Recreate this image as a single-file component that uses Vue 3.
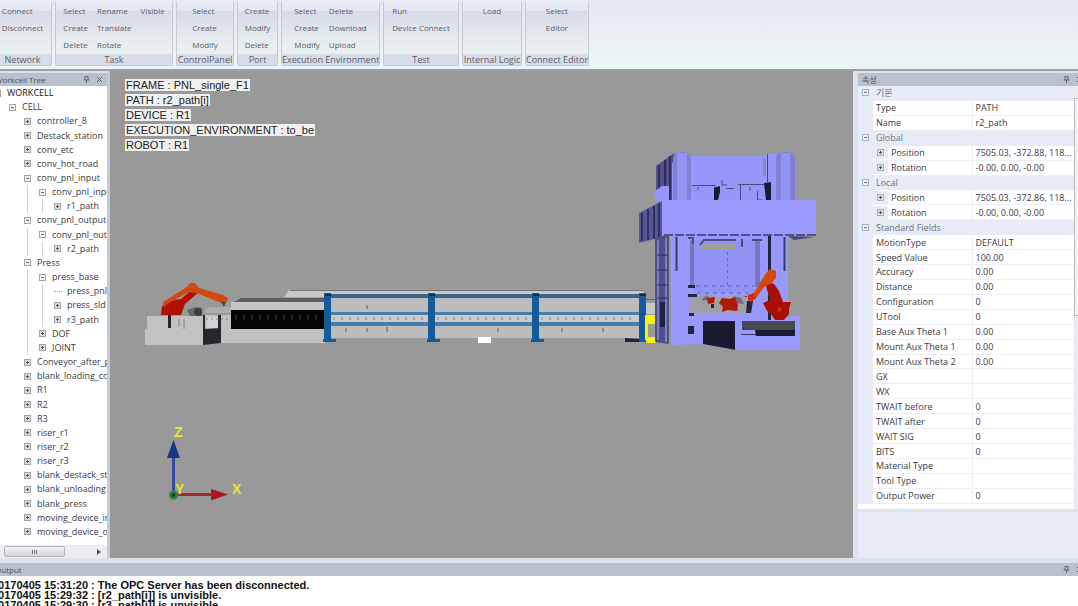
<script setup>
import { ref } from 'vue'

const ribbon = [
  { name: 'Network', cls: 'g-network', cols: [['Connect', 'Disconnect']] },
  { name: 'Task', cls: 'g-task', cols: [['Select', 'Create', 'Delete'], ['Rename', 'Translate', 'Rotate'], ['Visible']] },
  { name: 'ControlPanel', cls: 'g-control', cols: [['Select', 'Create', 'Modify']] },
  { name: 'Port', cls: 'g-port', cols: [['Create', 'Modify', 'Delete']] },
  { name: 'Execution Environment', cls: 'g-exec', cols: [['Select', 'Create', 'Modify'], ['Delete', 'Download', 'Upload']] },
  { name: 'Test', cls: 'g-test', cols: [['Run', 'Device Connect']] },
  { name: 'Internal Logic', cls: 'g-logic', cols: [['Load']] },
  { name: 'Connect Editor', cls: 'g-editor', cols: [['Select', 'Editor']] }
]

const tree = [
  [0, 'WORKCELL', '-'], [1, 'CELL', '-'], [2, 'controller_8', '+'], [2, 'Destack_station', '+'],
  [2, 'conv_etc', '+'], [2, 'conv_hot_road', '+'], [2, 'conv_pnl_input', '-'], [3, 'conv_pnl_input', '-'],
  [4, 'r1_path', '+'], [2, 'conv_pnl_output', '-'], [3, 'conv_pnl_output', '-'], [4, 'r2_path', '+'],
  [2, 'Press', '-'], [3, 'press_base', '-'], [4, 'press_pnl_', ''], [4, 'press_sld', '+'],
  [4, 'r3_path', '+'], [3, 'DOF', '+'], [3, 'JOINT', '+'], [2, 'Conveyor_after_press', '+'],
  [2, 'blank_loading_conv', '+'], [2, 'R1', '+'], [2, 'R2', '+'], [2, 'R3', '+'], [2, 'riser_r1', '+'],
  [2, 'riser_r2', '+'], [2, 'riser_r3', '+'], [2, 'blank_destack_station', '+'], [2, 'blank_unloading', '+'],
  [2, 'blank_press', '+'], [2, 'moving_device_in', '+'], [2, 'moving_device_out', '+']
].map(([level, label, sign]) => ({ level, label, sign }))

const labels = [
  'FRAME : PNL_single_F1',
  'PATH : r2_path[i]',
  'DEVICE : R1',
  'EXECUTION_ENVIRONMENT : to_be',
  'ROBOT : R1'
]

const props = [
  { cat: '기본' }, { k: 'Type', v: 'PATH' }, { k: 'Name', v: 'r2_path' },
  { cat: 'Global' }, { k: 'Position', v: '7505.03, -372.88, 118...', sub: true }, { k: 'Rotation', v: '-0.00, 0.00, -0.00', sub: true },
  { cat: 'Local' }, { k: 'Position', v: '7505.03, -372.86, 118...', sub: true }, { k: 'Rotation', v: '-0.00, 0.00, -0.00', sub: true },
  { cat: 'Standard Fields' }, { k: 'MotionType', v: 'DEFAULT' }, { k: 'Speed Value', v: '100.00' },
  { k: 'Accuracy', v: '0.00' }, { k: 'Distance', v: '0.00' }, { k: 'Configuration', v: '0' }, { k: 'UTool', v: '0' },
  { k: 'Base Aux Theta 1', v: '0.00' }, { k: 'Mount Aux Theta 1', v: '0.00' }, { k: 'Mount Aux Theta 2', v: '0.00' },
  { k: 'GX', v: '' }, { k: 'WX', v: '' }, { k: 'TWAIT before', v: '0' }, { k: 'TWAIT after', v: '0' },
  { k: 'WAIT SIG', v: '0' }, { k: 'BITS', v: '0' }, { k: 'Material Type', v: '' }, { k: 'Tool Type', v: '' },
  { k: 'Output Power', v: '0' }
]

const log = [
  '20170405 15:31:20 : The OPC Server has been disconnected.',
  '20170405 15:29:32 : [r2_path[i]] is unvisible.',
  '20170405 15:29:30 : [r3_path[i]] is unvisible.'
]

const selected = ref(-1)
const posts = [325, 429, 533, 640]
const ticks = Array.from({ length: 38 }, (_, i) => 334 + i * 8)
const rollers = Array.from({ length: 11 }, (_, i) => 236 + i * 8)
</script>

<template>
  <div class="app">
    <header class="ribbon">
      <section v-for="g in ribbon" :key="g.name" class="group" :class="g.cls">
        <div class="cols">
          <div v-for="(c, i) in g.cols" :key="i" class="col">
            <button v-for="b in c" :key="b" type="button">{{ b }}</button>
          </div>
        </div>
        <h2>{{ g.name }}</h2>
      </section>
    </header>

    <main class="work">
      <aside class="left">
        <div class="bar clipped">
          <h3>Workcell Tree</h3>
          <button type="button" class="tool" aria-label="Pin">
            <svg viewBox="0 0 7 7"><path d="M2 .5h3v3.5M2 .5v3.5M.5 4h6M3.5 4v3" /></svg>
          </button>
          <button type="button" class="tool" aria-label="Close">
            <svg viewBox="0 0 7 7"><path d="M1 1l5 5M6 1l-5 5" /></svg>
          </button>
        </div>
        <ul class="tree" role="tree" aria-label="Workcell Tree">
          <li v-for="(n, i) in tree" :key="i" role="treeitem" :aria-level="n.level + 1"
              :class="{ root: n.level === 0, on: selected === i }" @click="selected = i">
            <i v-for="s in n.level" :key="s" class="guide" :class="{ line: s > 2 }"></i>
            <span class="slot">
              <button v-if="n.sign" type="button" class="sign" :class="{ plus: n.sign === '+' }" :aria-label="'Toggle ' + n.label"></button>
              <span v-else class="leaf"></span>
            </span>
            <span class="name">{{ n.label }}</span>
          </li>
        </ul>
        <div class="hscroll">
          <div class="thumb"><i></i></div>
          <svg class="arrow" viewBox="0 0 4 6"><path d="M0 0l4 3-4 3z" /></svg>
        </div>
      </aside>

      <section class="view" aria-label="3D view">
        <svg class="scene" viewBox="110 71 743 487" preserveAspectRatio="xMinYMin meet" aria-hidden="true">
          <!-- conveyor bed -->
          <path fill="#c1c1c1" d="M205 315h120v28H205z" />
          <path fill="#999" d="M205 307h26v7h-26z" />
          <path fill="#adadad" d="M205 309l6-2h20v6h-26z" />
          <path fill="#5f5f5f" d="M234 302l7-4h84v5z" />
          <path fill="#c6c6c6" d="M231 302h94v8h-94z" />
          <path fill="#050505" d="M231 310h94v19h-94z" />
          <path v-for="x in rollers" :key="x" stroke="#3c3c3c" :d="`M${x} 315v5`" />
          <path fill="#d2d2d2" d="M207 317h11v12h-11z" />
          <path stroke="#8a8a8a" stroke-dasharray="2 3" d="M206 319h22" />
          <path fill="#c2c2c2" d="M147 316h56v29h-58v-16h2z" />
          <path fill="#26262d" d="M203 329l18-1v15l-18 2zM203 315h2v15h-2zM218 315h3v14h-3z" />
          <path stroke="#24242a" stroke-width="3" d="M169.500 315v13" />
          <path stroke="#9ba2ae" stroke-width="2" d="M179 319v8M184 319v10" />
          <path fill="#666" d="M187 310l9-3 6 1v8h-12z" />
          <circle cx="198" cy="312" r="4" fill="#3c3c40" />

          <!-- left robot -->
          <path fill="#b00f04" d="M161 315l1-9 6-5 13-2 12-10 6 3-14 12-4 11z" />
          <path fill="#d1490c" d="M163 302l24-15 3-4 5 0 4 5 24 7 5 3-1 4-6 1-24-10-8-1-22 12-3 4z" />
          <path fill="#444" d="M221 302h5l-2 5z" />

          <!-- fenced line -->
          <path fill="#c9c9c9" d="M284 297l5-7h353l3 5H330v2z" />
          <path stroke="#777" d="M290 290.500h353" />
          <path fill="#bcbcbc" d="M327 295h317v43H327z" />
          <path fill="#cbcbcb" d="M329 315h311v7H329z" />
          <path v-for="x in ticks" :key="x" stroke="#888" :d="`M${x} 317v3`" />
          <path stroke="#8c8c8c" stroke-width="2" d="M346 328v4M367 305v4M367 328v4M387 327v5M498 328v4M562 328v4M603 328v4" />
          <path fill="#3b6388" d="M328 294h314v4H328z" />
          <path fill="#467fae" d="M328 312h314v3H328zM328 322h314v4H328z" />
          <g v-for="x in posts" :key="x" fill="#155a99">
            <path :d="`M${x - 1} 293h7v46h5v3h-13v-3h1z`" />
            <path fill="#152b48" :d="`M${x} 294h6v2h-6z`" />
          </g>
          <path fill="#1b2735" d="M625 338l14 1v3h-14z" />
          <path fill="#fff" d="M478 337h13v6h-13z" />
          <path fill="#c7c7c7" d="M646 303h10v11h-10z" />
          <path stroke="#666" d="M645 299.500h11" />
          <path fill="#f4f400" d="M645 315h11v9h-8v13h8v6h-9l-2-4z" />

          <!-- press head -->
          <path fill="#51518c" d="M656 166l18-13v48h-18z" />
          <path stroke="#2e2e55" stroke-width="2" d="M659 165v36M665 160v41M670 156v44" />
          <path fill="#9797fb" d="M688 156h76l2-2h14v47H672v-38h16zM654 192l8-6 7 0v15h-14z" />
          <rect x="673" y="152" width="18" height="60" rx="7" fill="#8080d4" />
          <path fill="#9494f4" d="M677 153h10v48h-10z" />
          <rect x="776" y="152" width="19" height="60" rx="7" fill="#8080d4" />
          <path fill="#9494f4" d="M781 153h9v48h-9z" />
          <path stroke="#4a4a80" fill="none" d="M692 185.500h23v4M722 180v5h5M726 188.500h8M738 184.500h26M740.500 185v15M698 187v3M750 187v4M757.500 191v9h5M767.500 154v28" />
          <path fill="#191b35" d="M714 188l6-2v6l-2 8h-4zM764 183l7-1v18h-5z" />
          <path fill="#8a8ab0" d="M763 158h3v18h-3z" />

          <!-- press body -->
          <path fill="#4f4f88" d="M655 236h14v108l-14-2z" />
          <path stroke="#7c7ccb" stroke-width="2" d="M658 240v100M666 238v104" />
          <path fill="#222342" d="M660 302h5v25h-5z" />
          <path stroke="#2c2c50" d="M657 255h10M657 270h10M657 285h10M657 298h10M671.500 236v60" />
          <path fill="#9898fd" d="M671 233h117v83h12v34l-65 0-33-6-31 1z" />
          <path fill="#7676bf" d="M690 240h4v48h-4zM755 241h5v46h-5z" />
          <path fill="#9292f6" d="M694 240h61v52h-61z" />
          <path fill="#a0a0a0" d="M702 244h34v5h-35z" />
          <path stroke="#4a4a80" fill="none" stroke-width="2" d="M688 238h5v6M700 245l4-5h32M742 239v8M752 240h10" />
          <path stroke="#6b6bb5" stroke-dasharray="3 3" d="M727.500 252v36" />
          <path stroke="#6464ad" stroke-dasharray="4 4" d="M696 286h58M697 293h54" />
          <path stroke="#3b3b6b" stroke-width="2" d="M676.500 237v34M784.500 237v34" />
          <path fill="#222540" d="M768 236h3v85h-3z" />
          <path fill="#252642" d="M688 285h7v3h-7zM688 294h9v3h-9zM689 309h5v7h-5zM688 326h6v8h-6zM741 296h6v6h-6z" />

          <!-- press slide beam -->
          <path fill="#56569a" d="M639 213l23-12v36l-23 6z" />
          <path stroke="#303058" stroke-width="2" d="M642 213v28M648 209v31M654 206v33M659 203v34" />
          <path fill="#9b9bff" d="M662 200h154v34H662z" />
          <path stroke="#505096" stroke-dasharray="9 2" stroke-width="2" d="M664 235h152" />
          <path fill="#484880" d="M788 236l26 1-20 3z" />

          <!-- die area and base -->
          <path fill="#a09fa3" d="M689 300l13-5 8-1 6 4 24-3 7 2v16h-58z" />
          <path fill="#6c6b82" d="M701 300l6-5 5 6zM733 296l8 2 3 6-7-1z" />
          <path fill="#b1180b" d="M707 298l8-1-1 6-6 1zM722 298l8 1 5-2 3 8-1 6-9-1-6 2 1-5-4-4z" />
          <path fill="#25253d" d="M711 304h3v4h-3zM747 301h6l-2 12h-5z" />
          <path fill="#191b31" d="M703 321h33v29l-33-6z" />
          <path fill="#9999ff" d="M735 320h65v30h-65z" />
          <path fill="#474950" d="M742 321h53v9h-53z" />
          <path fill="#181b2f" d="M755 330h40v6h-39z" />
          <path stroke="#35355d" d="M741 334.500h15" />

          <!-- right robot -->
          <path fill="#aa0f04" d="M765 281l9 3 5 7 4 11 8 0-2 7 0 5-5 6-9 0-4-6-4-3-4-8 7-3-4-14z" />
          <path fill="#d5470b" d="M748 296l6-3 12-20 4-4 6 2 0 7-5 6-6 2-9 12-4 3z" />
          <path fill="#d92c0b" d="M748 295l6-2 2 5-5 4-3-2z" />
          <path fill="#cf2a10" d="M778 307l4 1-1 4-4-1z" />

          <!-- axis triad -->
          <path stroke="#3d49a0" stroke-width="3" d="M173.500 494v-38" />
          <path fill="#1b3585" d="M173.500 440l6.500 18h-13z" />
          <path stroke="#a52a2a" stroke-width="3" d="M175 494.500h37" />
          <path fill="#a61a20" d="M211 489l17 5.500-17 6z" />
          <circle cx="173.500" cy="495" r="4.500" fill="#228840" />
          <circle cx="173.500" cy="495" r="2" fill="#123f26" />
          <g class="axis">
            <text x="174" y="437">Z</text>
            <text x="175" y="494">Y</text>
            <text x="232" y="494">X</text>
          </g>
        </svg>
        <ul class="labels">
          <li v-for="l in labels" :key="l">{{ l }}</li>
        </ul>
      </section>

      <aside class="right">
        <div class="bar">
          <h3>속성</h3>
          <button type="button" class="tool" aria-label="Pin">
            <svg viewBox="0 0 7 7"><path d="M2 .5h3v3.500M2 .5v3.500M.5 4h6M3.500 4v3" /></svg>
          </button>
          <button type="button" class="tool edge" aria-label="Close">
            <svg viewBox="0 0 7 7"><path d="M1 1l5 5M6 1l-5 5" /></svg>
          </button>
        </div>
        <div class="sheet">
          <table>
            <tbody>
              <tr v-for="(p, i) in props" :key="i" :class="{ cat: p.cat, sub: p.sub }">
                <template v-if="p.cat">
                  <th class="gut"><button type="button" class="sign" :aria-label="'Toggle ' + p.cat"></button></th>
                  <th colspan="2" scope="colgroup">{{ p.cat }}</th>
                </template>
                <template v-else>
                  <td class="gut"></td>
                  <th scope="row">
                    <span v-if="p.sub" class="subslot"><button type="button" class="sign plus" :aria-label="'Expand ' + p.k"></button></span>{{ p.k }}
                  </th>
                  <td class="val">{{ p.v }}</td>
                </template>
              </tr>
            </tbody>
          </table>
          <div class="vscroll"><i></i></div>
        </div>
        <div class="desc"></div>
      </aside>
    </main>

    <footer class="output">
      <div class="bar clipped">
        <h3>Output</h3>
        <button type="button" class="tool" aria-label="Pin">
          <svg viewBox="0 0 7 7"><path d="M2 .5h3v3.500M2 .5v3.500M.5 4h6M3.500 4v3" /></svg>
        </button>
        <button type="button" class="tool edge" aria-label="Close">
          <svg viewBox="0 0 7 7"><path d="M1 1l5 5M6 1l-5 5" /></svg>
        </button>
      </div>
      <ol class="log">
        <li v-for="l in log" :key="l">{{ l }}</li>
      </ol>
    </footer>
  </div>
</template>

<style>
body { margin: 0; overflow: hidden; }
</style>

<style scoped>
.app {
  display: flex;
  flex-direction: column;
  height: 100vh;
  overflow: hidden;
  background: #dce2ec;
  color: #3a3a3f;
  font: 8px/14px "Open Sans", "Noto Sans", "Noto Sans CJK KR", sans-serif;
}
* { box-sizing: border-box; }
ul, ol, h2, h3 { margin: 0; padding: 0; list-style: none; font-size: inherit; font-weight: 400; }
button { margin: 0; padding: 0; border: 0; background: none; font: inherit; color: inherit; text-align: left; }

.ribbon {
  display: flex;
  flex: none;
  gap: 3px;
  height: 71px;
  padding: 1px 0 3px;
  background: linear-gradient(#e3e7f0, #ecf4f6 90%);
  border-bottom: 2px solid #9d9da2;
}
.group {
  display: flex;
  flex: none;
  flex-direction: column;
  border: 1px solid #c5c9d2;
  border-top-color: #eceff5;
  border-radius: 2px;
  background: linear-gradient(#e9ecf4 0, #e2e6f0 14%, #d6dbe8 15%, #e9eeef 70%);
  color: #5b6069;
}
.g-network { width: 59px; margin-left: -7px; }
.g-task { width: 118px; }
.g-control { width: 58px; }
.g-port { width: 41px; }
.g-exec { width: 99px; }
.g-test { width: 76px; }
.g-logic { width: 60px; }
.g-editor { width: 64px; }
.cols { display: flex; flex: 1; justify-content: center; gap: 9px; }
.col { display: flex; flex-direction: column; }
.col button { height: 17px; line-height: 17px; white-space: nowrap; }
.group h2 { height: 11px; background: #d7dce8; font-size: 9px; line-height: 11px; text-align: center; white-space: nowrap; }

.work {
  display: grid;
  flex: 1;
  grid-template-columns: 110px minmax(0, 1fr) 220px;
  min-height: 0;
}
.bar {
  display: flex;
  flex: none;
  align-items: center;
  gap: 6px;
  height: 13px;
  padding: 0 4px;
  background: #b9c1cd;
  color: #4a4f58;
  line-height: 13px;
}
.bar h3 { flex: 1; }
.clipped h3 { margin-left: -9px; }
.tool { display: flex; width: 7px; height: 7px; }
.tool svg { width: 7px; height: 7px; fill: none; stroke: #5c626c; }
.edge { margin-right: -9px; }

.left { display: flex; flex-direction: column; min-height: 0; padding-top: 2px; border-right: 3px solid #c3cad8; overflow: hidden; }
.tree {
  display: flex;
  flex: 1;
  flex-direction: column;
  min-height: 0;
  padding-bottom: 6px;
  background: #fff;
  font-size: 9px;
  overflow: hidden;
}
.tree li { display: flex; flex: 1; align-items: center; margin-left: -10px; white-space: nowrap; }
.root .name { color: #111; }
.on .name { background: #dfe8f6; }
.guide { flex: none; align-self: stretch; width: 15px; }
.line { background: linear-gradient(#d4d4d4, #d4d4d4) 7px 0 / 1px 100% no-repeat; }
.slot { display: flex; flex: none; justify-content: center; width: 15px; margin-right: 2px; }
.leaf { width: 8px; border-top: 1px dotted #aaa; }
.sign {
  flex: none;
  width: 7px;
  height: 7px;
  border: 1px solid #a4a4a4;
  background: linear-gradient(#666, #666) center / 3px 1px no-repeat, #f5f5f5;
}
.plus { background: linear-gradient(#555, #555) center / 3px 1px no-repeat, linear-gradient(#555, #555) center / 1px 3px no-repeat, #ddd; }
.hscroll { display: flex; flex: none; align-items: center; justify-content: space-between; height: 13px; padding: 0 6px 0 4px; background: #ededf0; }
.thumb { display: flex; align-items: center; justify-content: center; width: 61px; height: 11px; border: 1px solid #b4b4b8; border-radius: 2px; background: linear-gradient(#f3f3f3, #d4d4d7); }
.thumb i { width: 5px; height: 4px; background: repeating-linear-gradient(90deg, #777 0 1px, transparent 1px 2px); }
.arrow { width: 4px; height: 6px; fill: #555; }

.view { position: relative; min-width: 0; background: #999; overflow: hidden; }
.scene { display: block; width: 100%; height: 100%; }
.axis { fill: #e8e82c; font: bold 14px "Liberation Sans", sans-serif; }
.labels {
  position: absolute;
  top: 8px;
  left: 15px;
  display: flex;
  flex-direction: column;
  align-items: flex-start;
  gap: 3px;
  font: 11px/12px "Liberation Sans", sans-serif;
  color: #222;
}
.labels li { padding: 0 1px; background: #f0f0f0; white-space: nowrap; }

.right { display: flex; flex-direction: column; min-height: 0; margin-left: -5px; padding: 2px 0 0 5px; background: #dce2ec; position: relative; }
.sheet { display: flex; flex: 1; min-height: 0; background: #fff; font-size: 9px; }
table { flex: 1; height: 418px; border-collapse: collapse; table-layout: fixed; background: #fff; }
th, td { height: 1px; padding: 0; font-weight: 400; text-align: left; white-space: nowrap; line-height: 13px; border-bottom: 1px solid #eceff6; }
th { padding-left: 3px; width: 99px; }
.gut { width: 15px; padding: 0 0 0 4px; background: #e6ebf6; border-color: #e6ebf6; }
.gut .sign { display: block; border-color: #a9b0bf; }
.cat th { background: #e6ebf6; border-color: #e6ebf6; color: #6f757f; }
.val { padding-left: 3px; border-left: 1px solid #eceff6; overflow: hidden; }
.sub th { padding-left: 0; }
.subslot { display: inline-flex; align-items: center; justify-content: center; width: 15px; height: 13px; margin-right: 3px; background: #e6ebf6; vertical-align: top; }
.subslot .sign { border-color: #a9b0bf; }
.vscroll { flex: none; width: 4px; background: #ececf0; }
.vscroll i { display: block; height: 218px; margin-top: 12px; border: 1px solid #b9b9be; border-right: 0; background: #f2f2f4; }
.desc { flex: none; height: 46px; margin-top: 3px; background: #e6ebf6; }

.output { flex: none; height: 48px; padding-top: 5px; overflow: hidden; background: #dce2ec; }
.log { height: 30px; padding-top: 4px; background: #fff; color: #111; font: bold 11px/10px "Liberation Sans", sans-serif; }
.log li { margin-left: -8px; white-space: nowrap; }
</style>
